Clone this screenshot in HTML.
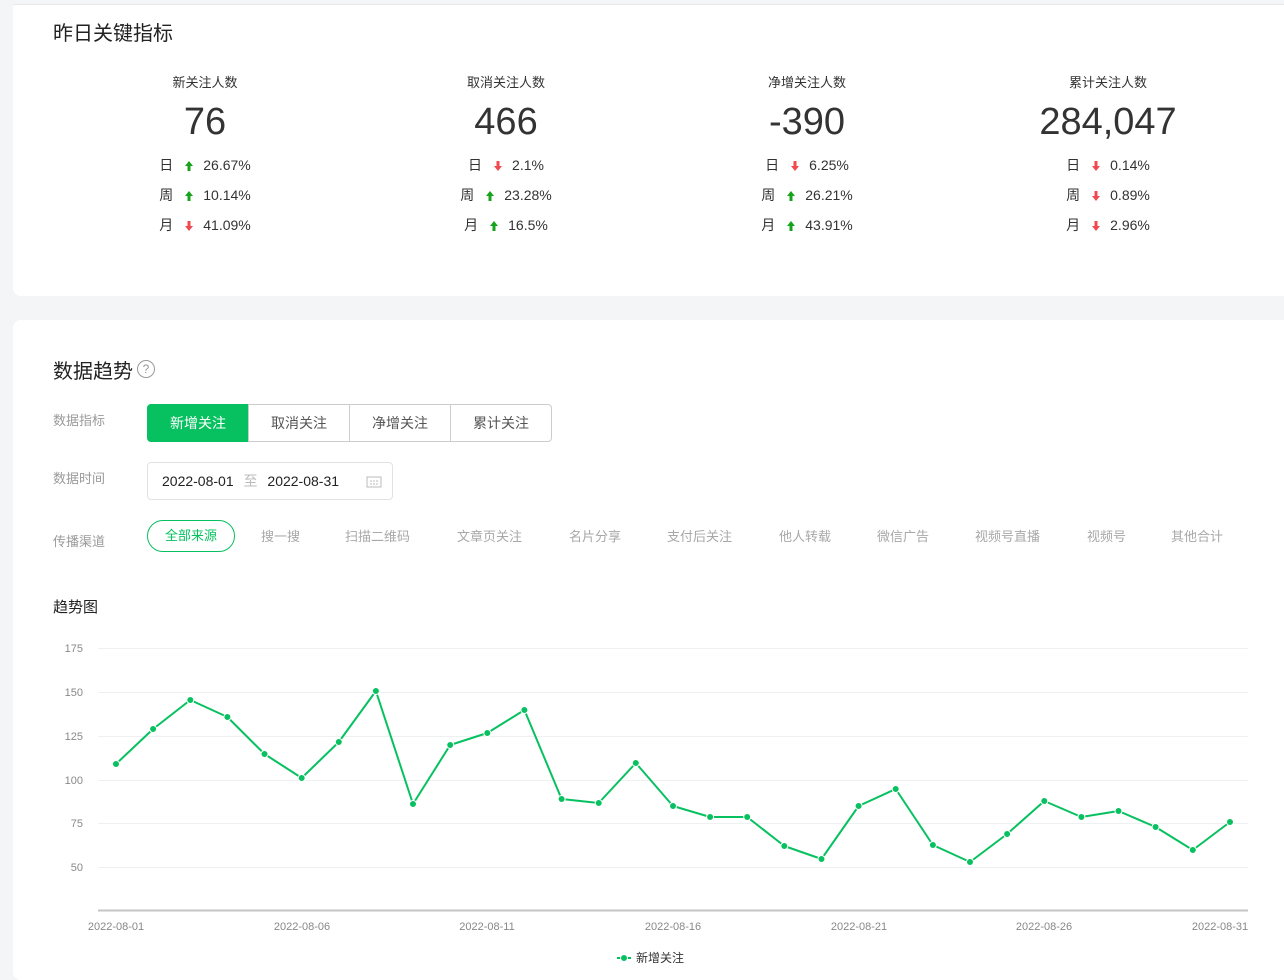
<!DOCTYPE html>
<html><head><meta charset="utf-8"><style>
*{margin:0;padding:0;box-sizing:border-box}
body{width:1284px;height:963px;overflow:hidden;background:#f4f5f7;font-family:"Liberation Sans","Noto Sans CJK SC",sans-serif;color:#333;position:relative}
.card{position:absolute;background:#fff}
.a{position:absolute;white-space:nowrap}
.col{position:absolute;width:300px;text-align:center}
.col .t{position:absolute;top:72px;width:100%;font-size:13px;color:#333}
.col .n{position:absolute;top:100px;width:100%;font-size:38px;color:#333;line-height:44px}
.r{position:absolute;width:100%;font-size:14px;color:#333;line-height:18px}
.up,.dn{display:inline-block;width:8px;height:10px;margin:0 10px 0 12px;vertical-align:-1px}
.btn{position:absolute;top:404px;height:38px;width:102px;border:1px solid #ccc;font-size:14px;color:#555;text-align:center;line-height:36px}
.lab{font-size:13px;color:#9a9a9a}
.ch{position:absolute;top:526px;font-size:13px;color:#a8a8a8}
</style></head><body>
<div class="card" style="left:13px;top:4px;width:1280px;height:292px;border-radius:0 0 8px 8px;border-top:1px solid #e8e8e8"></div>
<div class="card" style="left:13px;top:320px;width:1280px;height:660px;border-radius:8px"></div>
<div class="a" style="left:53px;top:17px;font-size:20px;color:#222">昨日关键指标</div>

<svg width="0" height="0" style="position:absolute"><defs>
<symbol id="u" viewBox="0 0 8 10"><path d="M4 0L8 5H5.5V10H2.5V5H0Z" fill="#17a31c"/></symbol>
<symbol id="d" viewBox="0 0 8 10"><path d="M4 10L8 5H5.5V0H2.5V5H0Z" fill="#f0494f"/></symbol>
</defs></svg>

<div class="col" style="left:55px"><div class="t">新关注人数</div><div class="n">76</div>
<div class="r" style="top:156px">日<svg class="up"><use href="#u"/></svg>26.67%</div>
<div class="r" style="top:186px">周<svg class="up"><use href="#u"/></svg>10.14%</div>
<div class="r" style="top:216px">月<svg class="dn"><use href="#d"/></svg>41.09%</div></div>
<div class="col" style="left:356px"><div class="t">取消关注人数</div><div class="n">466</div>
<div class="r" style="top:156px">日<svg class="dn"><use href="#d"/></svg>2.1%</div>
<div class="r" style="top:186px">周<svg class="up"><use href="#u"/></svg>23.28%</div>
<div class="r" style="top:216px">月<svg class="up"><use href="#u"/></svg>16.5%</div></div>
<div class="col" style="left:657px"><div class="t">净增关注人数</div><div class="n">-390</div>
<div class="r" style="top:156px">日<svg class="dn"><use href="#d"/></svg>6.25%</div>
<div class="r" style="top:186px">周<svg class="up"><use href="#u"/></svg>26.21%</div>
<div class="r" style="top:216px">月<svg class="up"><use href="#u"/></svg>43.91%</div></div>
<div class="col" style="left:958px"><div class="t">累计关注人数</div><div class="n">284,047</div>
<div class="r" style="top:156px">日<svg class="dn"><use href="#d"/></svg>0.14%</div>
<div class="r" style="top:186px">周<svg class="dn"><use href="#d"/></svg>0.89%</div>
<div class="r" style="top:216px">月<svg class="dn"><use href="#d"/></svg>2.96%</div></div>

<div class="a" style="left:53px;top:355px;font-size:20px;color:#222">数据趋势</div>
<div class="a" style="left:137px;top:360px;width:18px;height:18px;border:1px solid #999;border-radius:50%;font-size:12px;color:#999;text-align:center;line-height:16px">?</div>

<div class="a lab" style="left:53px;top:410px">数据指标</div>
<div class="btn" style="left:147px;background:#07c160;border-color:#07c160;color:#fff;border-radius:4px 0 0 4px">新增关注</div>
<div class="btn" style="left:248px">取消关注</div>
<div class="btn" style="left:349px">净增关注</div>
<div class="btn" style="left:450px;border-radius:0 4px 4px 0">累计关注</div>

<div class="a lab" style="left:53px;top:468px">数据时间</div>
<div class="a" style="left:147px;top:462px;width:246px;height:38px;border:1px solid #e2e2e2;border-radius:4px;font-size:14px;line-height:36px;padding-left:14px;color:#222">2022-08-01 <span style="color:#bbb;margin:0 6px">至</span> 2022-08-31
<svg style="position:absolute;right:10px;top:12px" width="16" height="13"><rect x="1" y="2" width="14" height="10" fill="none" stroke="#bbb"/><path d="M4 6h2M7 6h2M10 6h2M4 9h2M7 9h2M10 9h2" stroke="#bbb"/></svg></div>

<div class="a lab" style="left:53px;top:531px">传播渠道</div>
<div class="a" style="left:147px;top:520px;width:88px;height:32px;border:1px solid #07c160;border-radius:16px;color:#07c160;font-size:13px;text-align:center;line-height:30px">全部来源</div>
<div class="ch" style="left:261px">搜一搜</div>
<div class="ch" style="left:345px">扫描二维码</div>
<div class="ch" style="left:457px">文章页关注</div>
<div class="ch" style="left:569px">名片分享</div>
<div class="ch" style="left:667px">支付后关注</div>
<div class="ch" style="left:779px">他人转载</div>
<div class="ch" style="left:877px">微信广告</div>
<div class="ch" style="left:975px">视频号直播</div>
<div class="ch" style="left:1087px">视频号</div>
<div class="ch" style="left:1171px">其他合计</div>

<div class="a" style="left:53px;top:596px;font-size:15px;color:#222">趋势图</div>

<svg class="a" style="left:0;top:0" width="1284" height="963">
<g stroke="#eef0f2" stroke-width="1">
<path d="M98 648.5H1248M98 692.5H1248M98 736.5H1248M98 780.5H1248M98 823.5H1248M98 867.5H1248"/></g>
<path d="M98 910.5H1248" stroke="#c4c4c4" stroke-width="2"/>
<g font-size="11" fill="#888" text-anchor="end" font-family="Liberation Sans">
<text x="83" y="652">175</text><text x="83" y="696">150</text><text x="83" y="740">125</text><text x="83" y="784">100</text><text x="83" y="827">75</text><text x="83" y="871">50</text></g>
<g font-size="11" fill="#888" text-anchor="middle" font-family="Liberation Sans">
<text x="116" y="930">2022-08-01</text><text x="302" y="930">2022-08-06</text><text x="487" y="930">2022-08-11</text><text x="673" y="930">2022-08-16</text><text x="859" y="930">2022-08-21</text><text x="1044" y="930">2022-08-26</text><text x="1220" y="930">2022-08-31</text></g>
<polyline fill="none" stroke="#07c160" stroke-width="2" stroke-linejoin="round" points="116,764 153.1,729 190.3,700 227.4,717 264.5,754 301.7,778 338.8,742 375.9,691 413,804 450.2,745 487.3,733 524.4,710 561.6,799 598.7,803 635.8,763 673,806 710.1,817 747.2,817 784.3,846 821.5,859 858.6,806 895.7,789 932.9,845 970,862 1007.1,834 1044.3,801 1081.4,817 1118.5,811 1155.6,827 1192.8,850 1230,822"/>
<g fill="#07c160" stroke="#fff" stroke-width="1">
<circle cx="116" cy="764" r="3.5"/><circle cx="153.1" cy="729" r="3.5"/><circle cx="190.3" cy="700" r="3.5"/><circle cx="227.4" cy="717" r="3.5"/><circle cx="264.5" cy="754" r="3.5"/><circle cx="301.7" cy="778" r="3.5"/><circle cx="338.8" cy="742" r="3.5"/><circle cx="375.9" cy="691" r="3.5"/><circle cx="413" cy="804" r="3.5"/><circle cx="450.2" cy="745" r="3.5"/><circle cx="487.3" cy="733" r="3.5"/><circle cx="524.4" cy="710" r="3.5"/><circle cx="561.6" cy="799" r="3.5"/><circle cx="598.7" cy="803" r="3.5"/><circle cx="635.8" cy="763" r="3.5"/><circle cx="673" cy="806" r="3.5"/><circle cx="710.1" cy="817" r="3.5"/><circle cx="747.2" cy="817" r="3.5"/><circle cx="784.3" cy="846" r="3.5"/><circle cx="821.5" cy="859" r="3.5"/><circle cx="858.6" cy="806" r="3.5"/><circle cx="895.7" cy="789" r="3.5"/><circle cx="932.9" cy="845" r="3.5"/><circle cx="970" cy="862" r="3.5"/><circle cx="1007.1" cy="834" r="3.5"/><circle cx="1044.3" cy="801" r="3.5"/><circle cx="1081.4" cy="817" r="3.5"/><circle cx="1118.5" cy="811" r="3.5"/><circle cx="1155.6" cy="827" r="3.5"/><circle cx="1192.8" cy="850" r="3.5"/><circle cx="1230" cy="822" r="3.5"/>
</g>
<path d="M617 958H631" stroke="#07c160" stroke-width="2"/><circle cx="624" cy="958" r="3.5" fill="#07c160" stroke="#fff"/>
<text x="636" y="962" font-size="12" fill="#333" font-family="Liberation Sans,Noto Sans CJK SC">新增关注</text>
</svg>
</body></html>
